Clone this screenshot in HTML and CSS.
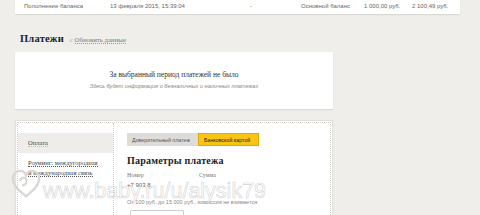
FILE: index.html
```html
<!DOCTYPE html>
<html lang="ru">
<head>
<meta charset="utf-8">
<title>Платежи</title>
<link rel="stylesheet" href="styles.css">
</head>
<body>
<div class="page">
  <div class="card history">
    <div class="hrow">
      <span class="c1">Пополнение баланса</span>
      <span class="c2">13 февраля 2015, 15:39:04</span>
      <span class="c3">-</span>
      <span class="c4">Основной баланс</span>
      <span class="c5">1 000,00 руб.</span>
      <span class="c6">2 100,49 руб.</span>
    </div>
  </div>

  <div class="section-head">
    <h2 class="title">Платежи</h2>
    <a class="refresh"><span class="ricon">c</span><span class="rtext">Обновить данные</span></a>
  </div>

  <div class="card empty">
    <p class="empty-main">За выбранный период платежей не было</p>
    <p class="empty-sub">Здесь будет информация о безналичных и наличных платежах</p>
  </div>

  <div class="card pay">
    <div class="pay-inner">
      <div class="side">
        <div class="side-item active"><span class="ul">Оплата</span></div>
        <div class="side-item"><span class="ul">Роуминг: междугородная<br>и международная связь</span></div>
      </div>
      <div class="main">
        <div class="tabs">
          <span class="tab">Доверительный платеж</span>
          <span class="tab on">Банковской картой</span>
        </div>
        <h3 class="ptitle">Параметры платежа</h3>
        <div class="fields">
          <div class="field f1">
            <div class="flabel">Номер</div>
            <div class="fval">+7 903 8</div>
          </div>
          <div class="field f2">
            <div class="flabel">Сумма</div>
            <div class="fval"></div>
          </div>
        </div>
        <div class="hint">От 100 руб. до 15 000 руб., комиссия не взимается</div>
        <div class="btn"></div>
      </div>
    </div>
  </div>

  <svg class="wm-logo" width="32" height="32" viewBox="0 0 34 34">
    <path d="M17 30 C8 23 3 18 3 11 C3 6 7 3 11 3 C14 3 16 5 17 8 C18 5 20 3 23 3 C27 3 31 6 31 11 C31 18 26 23 17 30 Z" fill="none" stroke="#dad8d4" stroke-width="2.4"/>
    <path d="M11 14 C11 10 15 9 17 12 C19 15 16 19 13 18" fill="none" stroke="#dad8d4" stroke-width="2.2"/>
  </svg>
  <span class="wm-text">www.baby.ru/u/alysik79</span>
</div>
</body>
</html>
```

FILE: styles.css
```css
html, body {
  margin: 0;
  padding: 0;
  background: #efeeea;
  height: 100%;
  overflow: hidden;
}

.page {
  position: relative;
  padding-left: 15px;
  font-family: "Liberation Serif", serif;
  color: #333;
}

.card {
  background: #fff;
  box-shadow: 0 1px 1px #dcdad5;
}

.history {
  width: 445px;
  height: 14px;
}

.hrow {
  display: flex;
  align-items: center;
  height: 12px;
  font-family: "Liberation Sans", sans-serif;
  font-size: 6px;
  color: #666;
}
.c1 { margin-left: 9px; width: 86px; }
.c2 { width: 140px; }
.c3 { width: 51px; }
.c4 { width: 63px; }
.c5 { width: 48px; }

.section-head {
  display: flex;
  align-items: baseline;
  gap: 6px;
  height: 38px;
  padding-left: 5px;
  box-sizing: border-box;
  padding-top: 19px;
}
.title {
  margin: 0;
  font-size: 10.5px;
  font-weight: bold;
  color: #222;
  letter-spacing: 0.2px;
}
.refresh {
  display: flex;
  align-items: baseline;
  gap: 2px;
  font-size: 6.8px;
  color: #777;
}
.ricon { font-size: 6px; color: #999; }
.rtext { border-bottom: 1px dotted #999; line-height: 7px; }

.empty {
  width: 318px;
  height: 57px;
  box-sizing: border-box;
  padding-top: 18px;
  text-align: center;
}
.empty-main {
  margin: 0;
  font-size: 7.5px;
  color: #333;
}
.empty-sub {
  margin: 4px 0 0;
  font-family: "Liberation Sans", sans-serif;
  font-style: italic;
  font-size: 5.6px;
  color: #888;
}

.pay {
  margin-top: 11px;
  width: 318px;
  height: 110px;
  box-sizing: border-box;
  border: 1px solid #e2e0dc;
  padding: 1px;
}
.pay-inner {
  display: flex;
  height: 100%;
  border: 1px dotted #cfcdc8;
  border-bottom: none;
}
.side {
  width: 95px;
  border-right: 1px dotted #cfcdc8;
  padding-top: 10px;
}
.side-item {
  padding: 5px 10px 5px;
  font-size: 6.5px;
  color: #444;
  line-height: 10px;
}
.side-item.active {
  background: #eeedea;
  height: 20px;
  box-sizing: border-box;
  padding-top: 5px;
}
.ul { border-bottom: 1px dotted #555; }
.side-item.active .ul { border-bottom-color: #bbb; }

.main {
  flex: 1;
  padding: 10px 0 0 13px;
}
.tabs {
  display: flex;
  height: 13px;
}
.tab {
  display: flex;
  align-items: center;
  padding: 0 5px;
  font-family: "Liberation Sans", sans-serif;
  font-size: 5.3px;
  color: #555;
  background: #dedcd8;
  width: 71px;
  box-sizing: border-box;
}
.tab.on {
  width: 61px;
  background: #f9c513;
  color: #222;
  border: 1px solid #e5a800;
}
.ptitle {
  margin: 9px 0 0;
  font-size: 10px;
  font-weight: bold;
  color: #222;
  letter-spacing: 0.2px;
}
.fields {
  display: flex;
  margin-top: 5px;
}
.field { width: 72px; }
.flabel {
  font-size: 6px;
  color: #777;
  line-height: 8px;
}
.fval {
  margin-top: 3px;
  height: 10px;
  font-family: "Liberation Sans", sans-serif;
  font-size: 6px;
  color: #666;
}
.hint {
  margin-top: 7px;
  font-family: "Liberation Sans", sans-serif;
  font-size: 5.5px;
  color: #888;
}
.btn {
  margin-top: 5px;
  margin-left: 3px;
  width: 52px;
  height: 10px;
  border: 1px solid #cfcdc8;
  border-bottom: none;
  border-radius: 2px 2px 0 0;
}

.wm-logo {
  position: absolute;
  left: 10px;
  top: 168px;
  pointer-events: none;
}
.wm-text {
  position: absolute;
  left: 43px;
  top: 181px;
  font-family: "Liberation Sans", sans-serif;
  font-size: 21.5px;
  line-height: 21px;
  white-space: nowrap;
  color: rgba(255, 255, 255, 0.55);
  -webkit-text-stroke: 0.6px rgba(160, 160, 160, 0.5);
  pointer-events: none;
}
```
